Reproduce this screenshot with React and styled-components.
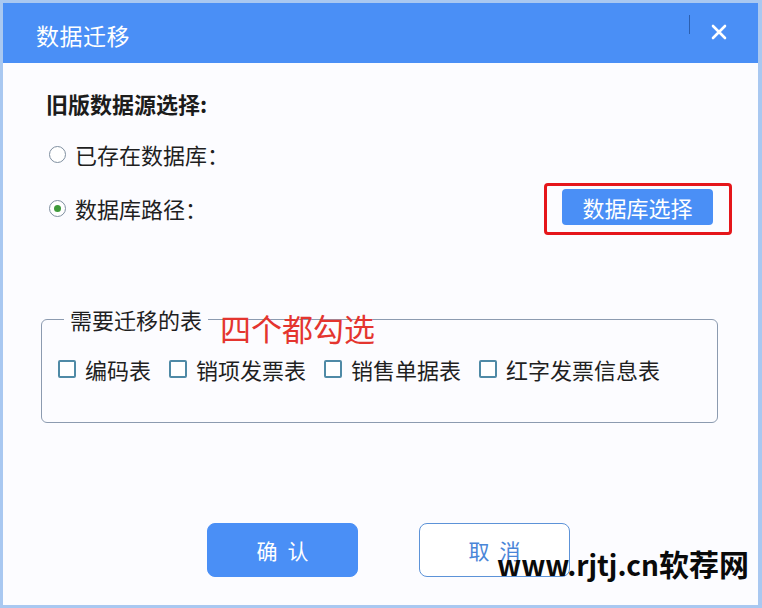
import React from "react";
import styled, { createGlobalStyle } from "styled-components";

const Global = createGlobalStyle`
  html, body { margin: 0; padding: 0; background: #ffffff; }
  body { font-family: "Noto Sans CJK SC", "Noto Sans", sans-serif; }
  * { box-sizing: border-box; }
`;

const Window = styled.div`
  position: relative;
  width: 762px;
  height: 608px;
  border: 3px solid #a9c8f1;
  border-right-width: 4px;
  background: #fcfcff;
  overflow: hidden;
`;

const TitleBar = styled.div`
  height: 60px;
  background: #4a8ff6;
  display: flex;
  align-items: center;
  padding: 0 0 0 33px;
  color: #fff;
`;

const Title = styled.div`
  flex: 1;
  font-size: 23px;
  line-height: 30px;
  margin-top: 4px;
  letter-spacing: 0.5px;
`;

const Divider = styled.div`
  width: 1px;
  height: 19px;
  background: #2c5fb0;
  align-self: flex-start;
  margin-top: 12px;
`;

const CloseBtn = styled.div`
  width: 68px;
  padding-right: 10px;
  display: flex;
  justify-content: center;
  align-items: center;
  margin-top: -3px;
`;

const Body = styled.div`
  padding: 0 26px 0 38px;
`;

const SectionTitle = styled.div`
  margin: 25px 0 0 5px;
  font-size: 22px;
  line-height: 30px;
  font-weight: 700;
  color: #1c1c1c;
`;

const Options = styled.div`
  margin-top: 10px;
  display: flex;
  flex-direction: column;
  gap: 2px;
`;

const OptionRow = styled.div`
  height: 52px;
  display: flex;
  align-items: center;
  padding-left: 8px;
`;

const Radio = styled.span`
  width: 17px;
  height: 17px;
  border-radius: 50%;
  border: 1px solid #7f8fa0;
  background: #fff;
  display: flex;
  align-items: center;
  justify-content: center;
  &::after {
    content: "";
    width: 7px;
    height: 7px;
    border-radius: 50%;
    background: ${(p) => (p.$checked ? "#3f9a3a" : "transparent")};
  }
`;

const Label = styled.span`
  margin-left: 9px;
  font-size: 22px;
  line-height: 30px;
  color: #1f1f1f;
  flex: ${(p) => (p.$grow ? 1 : "none")};
`;

const Highlight = styled.div`
  border: 3px solid #e5161b;
  border-radius: 4px;
  padding: 3px 16px 7px 15px;
  width: 188px;
  height: 52px;
  margin-top: 2px;
`;

const PrimarySmall = styled.div`
  height: 36px;
  border-radius: 4px;
  background: #4a8ff6;
  color: #fff;
  font-size: 22px;
  line-height: 36px;
  text-align: center;
`;

const TableWrap = styled.div`
  position: relative;
  margin: 70px 14px 0 0;
`;

const Fieldset = styled.fieldset`
  margin: 0;
  border: 1px solid #8c9bb0;
  border-radius: 6px;
  padding: 20px 16px 38px 16px;
`;

const Legend = styled.legend`
  padding: 0 6px;
  margin-left: 6px;
  font-size: 22px;
  line-height: 30px;
  color: #1f1f1f;
`;

const Annotation = styled.div`
  position: absolute;
  left: 179px;
  top: 4px;
  font-size: 31px;
  line-height: 40px;
  color: #e4352f;
`;

const CheckRow = styled.div`
  display: flex;
  align-items: center;
  gap: 18px;
  height: 30px;
`;

const CheckItem = styled.div`
  display: flex;
  align-items: center;
`;

const Box = styled.span`
  width: 18px;
  height: 18px;
  border: 2px solid #4f8aa6;
  border-radius: 2px;
  background: #fff;
`;

const Footer = styled.div`
  margin: 100px 0 0 166px;
  display: flex;
  gap: 61px;
`;

const Btn = styled.div`
  width: 151px;
  height: 54px;
  border-radius: 8px;
  background: ${(p) => (p.$primary ? "#4a8ff6" : "#fff")};
  border: 1px solid ${(p) => (p.$primary ? "#4a8ff6" : "#5d93d8")};
  color: ${(p) => (p.$primary ? "#fff" : "#4a86d8")};
  font-size: 21px;
  line-height: 52px;
  text-align: center;
  letter-spacing: 10px;
  text-indent: 10px;
`;

const Watermark = styled.div`
  position: absolute;
  left: 494px;
  top: 538px;
  font-size: 28px;
  line-height: 44px;
  font-weight: 700;
  color: #0a0a0a;
  font-family: "Noto Sans CJK SC", sans-serif;
  white-space: nowrap;
`;

const WatermarkCjk = styled.span`
  font-size: 30px;
`;

const tables = ["编码表", "销项发票表", "销售单据表", "红字发票信息表"];

export default function App() {
  return (
    <>
      <Global />
      <Window>
        <TitleBar>
          <Title>数据迁移</Title>
          <Divider />
          <CloseBtn>
            <svg width="16" height="16" viewBox="0 0 16 16">
              <path d="M2 2 L14 14 M14 2 L2 14" stroke="#fff" strokeWidth="2.6" strokeLinecap="round" />
            </svg>
          </CloseBtn>
        </TitleBar>
        <Body>
          <SectionTitle>旧版数据源选择:</SectionTitle>
          <Options>
            <OptionRow>
              <Radio />
              <Label>已存在数据库：</Label>
            </OptionRow>
            <OptionRow>
              <Radio $checked />
              <Label $grow>数据库路径：</Label>
              <Highlight>
                <PrimarySmall>数据库选择</PrimarySmall>
              </Highlight>
            </OptionRow>
          </Options>
          <TableWrap>
            <Fieldset>
              <Legend>需要迁移的表</Legend>
              <CheckRow>
                {tables.map((t) => (
                  <CheckItem key={t}>
                    <Box />
                    <Label>{t}</Label>
                  </CheckItem>
                ))}
              </CheckRow>
            </Fieldset>
            <Annotation>四个都勾选</Annotation>
          </TableWrap>
          <Footer>
            <Btn $primary>确认</Btn>
            <Btn>取消</Btn>
          </Footer>
        </Body>
        <Watermark>
          www.rjtj.cn<WatermarkCjk>软荐网</WatermarkCjk>
        </Watermark>
      </Window>
    </>
  );
}
